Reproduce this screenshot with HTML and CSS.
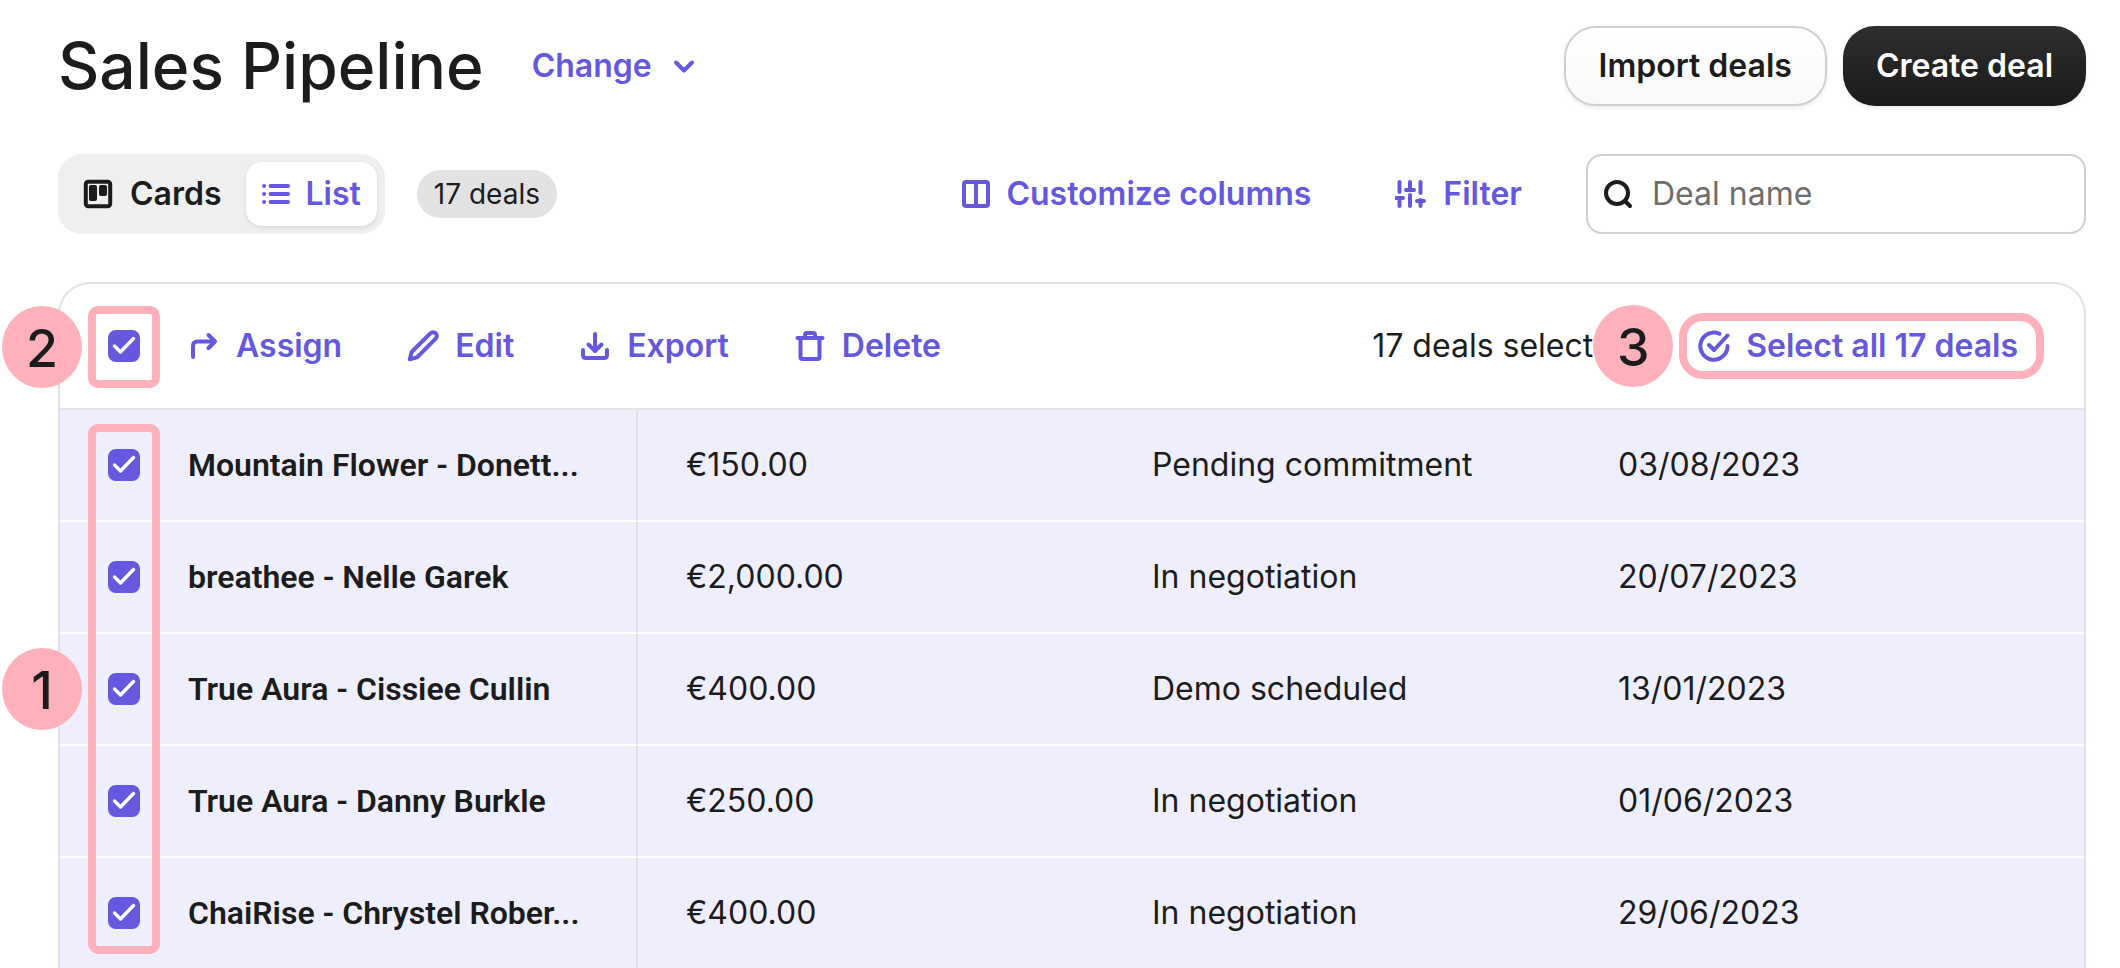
FILE: index.html
```html
<!DOCTYPE html>
<html lang="en">
<head>
<meta charset="utf-8">
<title>Sales Pipeline</title>
<link rel="stylesheet" href="styles.css">
</head>
<body>
<main class="page">
  <header class="page-header">
    <h1 class="title">Sales Pipeline</h1>
    <button class="link-button change" type="button">Change
      <svg class="icon" viewBox="0 0 32 32" aria-hidden="true"><path d="M8 12.5l8 8 8-8"/></svg>
    </button>
    <div class="header-actions">
      <button class="button button-light" type="button">Import deals</button>
      <button class="button button-dark" type="button">Create deal</button>
    </div>
  </header>

  <div class="controls">
    <div class="segmented">
      <button class="segment" type="button">
        <svg class="icon" viewBox="0 0 32 32" aria-hidden="true"><rect x="3.8" y="3.8" width="24.4" height="24.4" rx="2.5"/><rect class="solid" x="7" y="7" width="8" height="16" rx="2"/><rect class="solid" x="17" y="7" width="8" height="11" rx="2"/></svg>
        Cards
      </button>
      <button class="segment segment-active" type="button">
        <svg class="icon" viewBox="0 0 32 32" aria-hidden="true"><path d="M10.500 8h17.500M10.500 16h17.500M10.500 24h17.500M4 8h.01M4 16h.01M4 24h.01"/></svg>
        List
      </button>
    </div>
    <span class="badge">17 deals</span>
    <div class="control-actions">
      <button class="link-button" type="button">
        <svg class="icon icon-narrow" viewBox="2 0 28 32" aria-hidden="true"><rect x="4" y="4" width="24" height="24" rx="2"/><path d="M16 4v24"/></svg>
        Customize columns
      </button>
      <button class="link-button" type="button">
        <svg class="icon" viewBox="1 0 32 32" aria-hidden="true"><path d="M5.500 4v10M5.500 20v8M2 20h7M16 4v7M16 17v11M12 12h8M26.500 4v11M26.500 22v6M23 23h7"/></svg>
        Filter
      </button>
    </div>
    <label class="search">
      <svg class="icon" viewBox="0 0 32 32" aria-hidden="true"><circle cx="15" cy="15" r="11"/><path d="M23 23l5 5"/></svg>
      <input class="search-input" type="search" placeholder="Deal name" aria-label="Deal name">
    </label>
  </div>

  <section class="card">
    <div class="toolbar">
      <div class="check-wrap">
        <input class="check" type="checkbox" checked aria-label="Select page">
        <span class="frame frame-header"></span>
      </div>
      <div class="bulk">
        <button class="link-button" type="button">
          <svg class="icon" viewBox="0 0 32 32" aria-hidden="true"><path d="M5 27V16q0-4.500 4.500-4.500H27M20.500 5l6.500 6.500-6.500 6.500"/></svg>
          Assign
        </button>
        <button class="link-button" type="button">
          <svg class="icon" viewBox="0 0 32 32" aria-hidden="true"><path d="M2.800 29.200l1.800-7.200L23.300 3.300a3.500 3.500 0 0 1 5.400 5.400L10 27.400z"/></svg>
          Edit
        </button>
        <button class="link-button" type="button">
          <svg class="icon" viewBox="0 0 32 32" aria-hidden="true"><path d="M16 4v17M9.500 14.500l6.500 6.500 6.500-6.500M4 20v5q0 3 3 3h18q3 0 3-3v-5"/></svg>
          Export
        </button>
        <button class="link-button" type="button">
          <svg class="icon" viewBox="0 0 32 32" aria-hidden="true"><path d="M3.500 8h25M6.500 8v19q0 2 2 2h15q2 0 2-2V8M11 8V5q0-2 2-2h6q2 0 2 2v3"/></svg>
          Delete
        </button>
      </div>
      <span class="selected">17 deals select</span>
      <div class="select-all">
        <span class="marker marker-three">3</span>
        <button class="link-button select-all-button" type="button">
          <svg class="icon" viewBox="0 0 32 32" aria-hidden="true"><path d="M21.500 3.800A13.600 13.600 0 1 0 29.500 16M11 15l5 5L29.500 5.500"/></svg>
          Select all 17 deals
        </button>
      </div>
      <span class="marker marker-two">2</span>
    </div>

    <div class="table-wrap">
      <table class="deals">
        <colgroup><col class="col-check"><col class="col-name"><col class="col-data"><col class="col-data"><col></colgroup>
        <tbody>
          <tr><td class="check-cell"><input class="check" type="checkbox" checked aria-label="Mountain Flower"></td><td class="name">Mountain Flower - Donett...</td><td>€150.00</td><td>Pending commitment</td><td>03/08/2023</td></tr>
          <tr><td class="check-cell"><input class="check" type="checkbox" checked aria-label="breathee"></td><td class="name">breathee - Nelle Garek</td><td>€2,000.00</td><td>In negotiation</td><td>20/07/2023</td></tr>
          <tr><td class="check-cell"><input class="check" type="checkbox" checked aria-label="True Aura, Cissiee Cullin"></td><td class="name">True Aura - Cissiee Cullin</td><td>€400.00</td><td>Demo scheduled</td><td>13/01/2023</td></tr>
          <tr><td class="check-cell"><input class="check" type="checkbox" checked aria-label="True Aura, Danny Burkle"></td><td class="name">True Aura - Danny Burkle</td><td>€250.00</td><td>In negotiation</td><td>01/06/2023</td></tr>
          <tr><td class="check-cell"><input class="check" type="checkbox" checked aria-label="ChaiRise"></td><td class="name">ChaiRise - Chrystel Rober...</td><td>€400.00</td><td>In negotiation</td><td>29/06/2023</td></tr>
        </tbody>
      </table>
      <span class="frame frame-rows"></span>
      <span class="marker marker-one">1</span>
    </div>
  </section>
</main>
</body>
</html>
```
FILE: styles.css
```css
:root {
  --ink: #1c1c1c;
  --accent: #6558de;
  --line: #e1e1e1;
  --pink: #ffb1bb;
}

* { box-sizing: border-box; }

body {
  margin: 0;
  background: #fff;
  color: var(--ink);
  font: 400 32px/40px Inter, "Liberation Sans", sans-serif;
}

button, input { font: inherit; color: inherit; }

button {
  border: 0;
  background: none;
  cursor: pointer;
}

.page { padding: 26px 34px 0 58px; }

.icon {
  width: 32px;
  height: 32px;
  flex: none;
  fill: none;
  stroke: currentColor;
  stroke-width: 4;
  stroke-linecap: round;
  stroke-linejoin: round;
}

.icon .solid { fill: currentColor; stroke: none; }

.icon-narrow { width: 28px; }

.page-header {
  display: flex;
  align-items: center;
  height: 80px;
}

.title {
  margin: 0;
  font-size: 64px;
  line-height: 80px;
  font-weight: 500;
}

.link-button {
  display: flex;
  align-items: center;
  gap: 16px;
  padding: 0;
  color: var(--accent);
  font-weight: 600;
  white-space: nowrap;
}

.change { margin-left: 48px; }

.header-actions {
  display: flex;
  gap: 16px;
  margin-left: auto;
}

.button {
  height: 80px;
  padding: 0 33px;
  border-radius: 32px;
  font-weight: 600;
  white-space: nowrap;
  box-shadow: 0 2px 4px rgba(0, 0, 0, .08);
}

.button-light {
  border: 2px solid #cfcfcf;
  background: linear-gradient(#fff, #f9f9f9);
}

.button-dark {
  color: #fff;
  background: linear-gradient(#2e2e2e, #1a1a1a);
}

.controls {
  display: flex;
  align-items: center;
  margin-top: 48px;
}

.segmented {
  display: flex;
  padding: 8px;
  border-radius: 24px;
  background: #efefef;
}

.segment {
  display: flex;
  align-items: center;
  gap: 16px;
  height: 64px;
  padding: 0 24px 0 16px;
  border-radius: 16px;
  font-weight: 600;
}

.segment-active {
  gap: 14px;
  padding: 0 16px 0 14px;
  color: var(--accent);
  background: #fff;
  box-shadow: 0 2px 4px rgba(0, 0, 0, .1);
}

.badge {
  margin-left: 32px;
  padding: 4px 17px;
  border-radius: 24px;
  background: #e2e2e2;
  font-size: 28px;
}

.control-actions {
  display: flex;
  gap: 84px;
  margin: 0 64px 0 auto;
}

.search {
  display: flex;
  align-items: center;
  gap: 18px;
  width: 500px;
  height: 80px;
  padding: 0 16px 0 14px;
  border: 2px solid #cfcfcf;
  border-radius: 16px;
}

.search-input {
  flex: 1;
  min-width: 0;
  padding: 0;
  border: 0;
  outline: 0;
  background: none;
}

.search-input::placeholder { color: #6d6d6d; opacity: 1; }

.card {
  margin-top: 48px;
  border: 2px solid var(--line);
  border-bottom: 0;
  border-radius: 32px 32px 0 0;
}

.toolbar {
  position: relative;
  display: flex;
  align-items: center;
  height: 126px;
  padding: 0 40px 0 48px;
  border-bottom: 2px solid var(--line);
}

.check-wrap { position: relative; display: flex; }

.check {
  appearance: none;
  display: block;
  width: 32px;
  height: 32px;
  margin: 0;
  border-radius: 8px;
  background: var(--accent) url("data:image/svg+xml,%3Csvg xmlns='http://www.w3.org/2000/svg' viewBox='0 0 32 32'%3E%3Cpath d='M6.500 16l6 6L25.500 8.500' fill='none' stroke='white' stroke-width='3.400' stroke-linecap='round' stroke-linejoin='round'/%3E%3C/svg%3E");
}

.bulk {
  display: flex;
  gap: 65px;
  margin-left: 48px;
}

.bulk .icon, .select-all .icon { stroke-width: 4; }

.selected { margin-left: auto; white-space: nowrap; }

.select-all { position: relative; margin-left: 86px; }

.select-all-button {
  height: 66px;
  padding: 0 18px 0 11px;
  border: 8px solid var(--pink);
  border-radius: 24px;
}

.frame {
  position: absolute;
  border: 8px solid var(--pink);
  border-radius: 10px;
  pointer-events: none;
}

.frame-header { inset: -24px -20px -26px; }

.frame-rows {
  top: 14px;
  bottom: 14px;
  left: 28px;
  width: 72px;
}

.marker {
  position: absolute;
  display: grid;
  place-items: center;
  width: 80px;
  height: 82px;
  padding-top: 4px;
  border-radius: 50%;
  background: var(--pink);
  font-size: 52px;
  font-weight: 500;
  line-height: 60px;
}

.marker-one { left: -58px; top: 238px; }
.marker-two { left: -58px; top: 22px; }
.marker-three { right: 100%; top: -8px; margin-right: 6px; }

.table-wrap { position: relative; }

.deals {
  width: 100%;
  table-layout: fixed;
  border-collapse: separate;
  border-spacing: 0;
}

.col-check { width: 128px; }
.col-name { width: 450px; }
.col-data { width: 466px; }

.deals td {
  height: 112px;
  padding: 0 0 0 48px;
  border-bottom: 2px solid #fff;
  background: #efeefc;
  white-space: nowrap;
}

.deals tr:last-child td { height: 110px; border-bottom: 0; }

.deals .name {
  padding: 0;
  border-right: 2px solid var(--line);
  font-family: Roboto, sans-serif;
  font-weight: 600;
}
```
